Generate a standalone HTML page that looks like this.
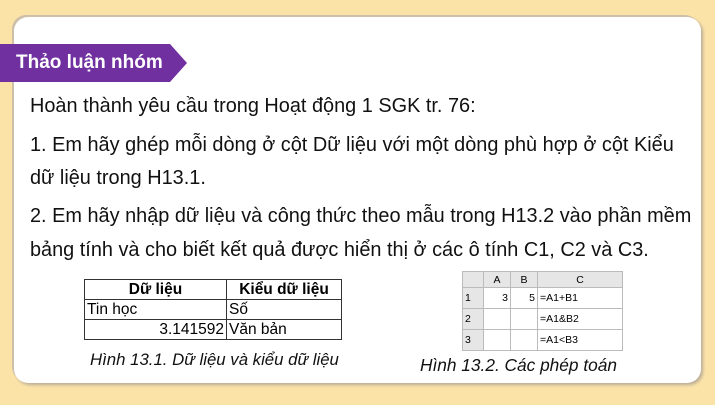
<!DOCTYPE html>
<html><head><meta charset="utf-8"><style>
body{margin:0;width:715px;height:405px;overflow:hidden;background:#fbe3a8;font-family:"Liberation Sans",Arial,sans-serif;position:relative}
.card{position:absolute;left:14px;top:17px;width:687px;height:366px;background:#fff;border-radius:14px;box-shadow:-2px -2px 0 #cdbfa8,2px 2px 3px #b9ab96}
.tag{position:absolute;left:0;top:44px;height:38px;width:170px;background:#7030a0;color:#fff;font-weight:bold;font-size:19px;line-height:38px;padding-left:16px;box-sizing:border-box}
.tag:after{content:"";position:absolute;right:-17px;top:0;border-left:17px solid #7030a0;border-top:19px solid transparent;border-bottom:19px solid transparent}
.l{position:absolute;left:30px;font-size:19.9px;color:#111;white-space:nowrap}
table{border-collapse:collapse;position:absolute}
.t1{font-size:15.5px}
.t1 td{border:1px solid #333;padding:0 2px;height:19px;line-height:19px}
.cap{position:absolute;font-style:italic;font-size:16.8px;color:#111;white-space:nowrap}
.t2{left:462px;top:271px;font-size:10.5px;background:#fff}
.t2 td{border:1px solid #bbb;height:20px;padding:0 2px}
.t2 tr:first-child td{background:#e6e6e6;height:15px;text-align:center}
.t2 td.h{background:#e6e6e6;width:16px}
</style></head><body>
<div class="card"></div>
<div class="tag">Thảo luận nhóm</div>
<div class="l" style="top:95px">Hoàn thành yêu cầu trong Hoạt động 1 SGK tr. 76:</div>
<div class="l" style="top:134px">1. Em hãy ghép mỗi dòng ở cột Dữ liệu với một dòng phù hợp ở cột Kiểu</div>
<div class="l" style="top:167px">dữ liệu trong H13.1.</div>
<div class="l" style="top:205px">2. Em hãy nhập dữ liệu và công thức theo mẫu trong H13.2 vào phần mềm</div>
<div class="l" style="top:239px">bảng tính và cho biết kết quả được hiển thị ở các ô tính C1, C2 và C3.</div>
<table class="t1" style="left:84px;top:279px;width:258px">
<tr><td style="width:137px;text-align:center;font-weight:bold">Dữ liệu</td><td style="text-align:center;font-weight:bold">Kiểu dữ liệu</td></tr>
<tr><td>Tin học</td><td>Số</td></tr>
<tr><td style="text-align:right">3.141592</td><td>Văn bản</td></tr>
</table>
<div class="cap" style="left:90px;top:350px">Hình 13.1. Dữ liệu và kiểu dữ liệu</div>
<table class="t2">
<tr><td class="h"></td><td style="width:22px">A</td><td style="width:22px">B</td><td style="width:80px">C</td></tr>
<tr><td class="h">1</td><td style="text-align:right">3</td><td style="text-align:right">5</td><td>=A1+B1</td></tr>
<tr><td class="h">2</td><td></td><td></td><td>=A1&amp;B2</td></tr>
<tr><td class="h">3</td><td></td><td></td><td>=A1&lt;B3</td></tr>
</table>
<div class="cap" style="left:420px;top:355px;font-size:17.3px">Hình 13.2. Các phép toán</div>
</body></html>
